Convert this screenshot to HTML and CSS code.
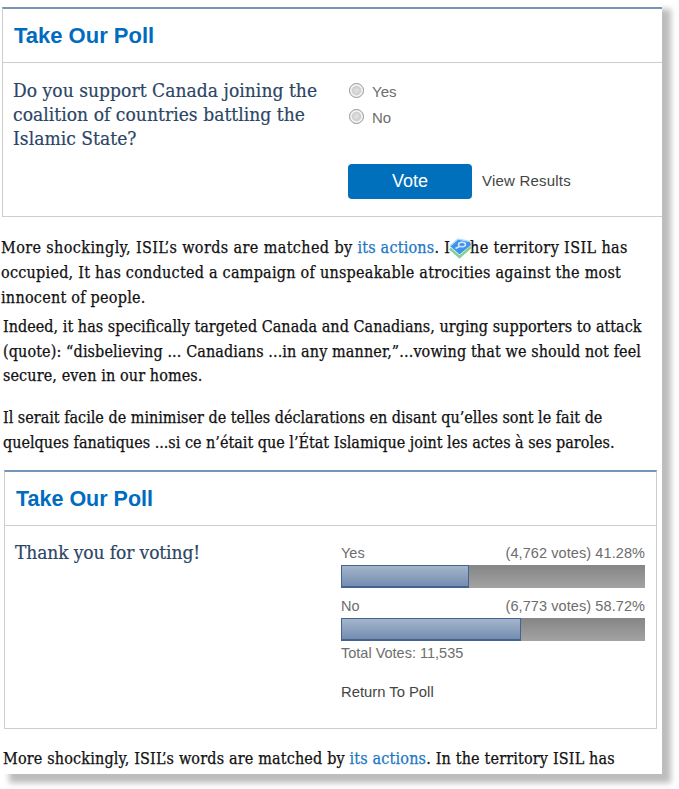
FILE: index.html
```html
<!DOCTYPE html>
<html lang="en">
<head>
    <meta charset="UTF-8">
    <meta name="viewport" content="width=device-width, initial-scale=1.0">
    <title>Take Our Poll</title>
    <link rel="stylesheet" href="styles.css">
</head>
<body>
    <div class="page">
        <!-- Open poll -->
        <section class="poll poll-open">
            <h2 class="poll-title">Take Our Poll</h2>
            <div class="poll-body">
                <p class="question">Do you support Canada joining the<br>coalition of countries battling the<br>Islamic State?</p>
                <form class="poll-form">
                    <label class="option"><input type="radio" name="answer"><span>Yes</span></label>
                    <label class="option"><input type="radio" name="answer"><span>No</span></label>
                    <div class="actions">
                        <button type="button" class="vote">Vote</button>
                        <a class="poll-link" href="#">View Results</a>
                    </div>
                </form>
            </div>
        </section>

        <p class="text text-first"><span class="lead">More shockingly, ISIL’s words are matched by <a href="#">its actions</a>. I<span class="marker">n t<svg class="marker-icon" width="24" height="24" viewBox="0 0 24 24">
            <path d="M1 11.500 L10.500 20 L22 10" fill="none" stroke="#86d192" stroke-width="2.500"/>
            <path d="M1 9 L9 2 L21 4.500 L22 8 L10.500 17.500 Z" fill="#3f93ec"/>
            <path d="M1 9 L9 2 L21 4.500" fill="none" stroke="#b5dcf8" stroke-width="1.500"/>
            <ellipse cx="13" cy="7.500" rx="3.500" ry="2.300" fill="#3f93ec" stroke="#d3ebfd" stroke-width="1.500"/>
            <path d="M10.500 9.500 L6.500 11.500" stroke="#d3ebfd" stroke-width="1.800"/>
        </svg></span>he territory ISIL has</span><br>occupied, It has conducted a campaign of unspeakable atrocities against the most<br>innocent of people.</p>
        <p class="text text-second"><span class="lead">Indeed, it has specifically targeted Canada and Canadians, urging supporters to attack</span><br>(quote): “disbelieving ... Canadians ...in any manner,”...vowing that we should not feel<br>secure, even in our homes.</p>
        <p class="text text-french" lang="fr">Il serait facile de minimiser de telles déclarations en disant qu’elles sont le fait de<br>quelques fanatiques ...si ce n’était que l’État Islamique joint les actes à ses paroles.</p>

        <!-- Poll results -->
        <section class="poll poll-results">
            <h2 class="poll-title">Take Our Poll</h2>
            <div class="poll-body">
                <p class="question">Thank you for voting!</p>
                <div class="results">
                    <div class="result">
                        <div class="result-label"><span>Yes</span><span class="votes">(4,762 votes) 41.28%</span></div>
                        <div class="bar"><div class="bar-fill" style="width: 42.1%"></div></div>
                    </div>
                    <div class="result">
                        <div class="result-label"><span>No</span><span class="votes">(6,773 votes) 58.72%</span></div>
                        <div class="bar"><div class="bar-fill" style="width: 59.2%"></div></div>
                    </div>
                    <div class="total">Total Votes: 11,535</div>
                    <a class="poll-link" href="#">Return To Poll</a>
                </div>
            </div>
        </section>

        <p class="text text-last">More shockingly, ISIL’s words are matched by <a href="#">its actions</a>. In the territory ISIL has</p>
    </div>
</body>
</html>
```
FILE: styles.css
```css
:root {
    --blue: #0070bd;
    --heading-blue: #006cbf;
    --navy: #2b4565;
    --line: #cdcdcd;
    --grey-text: #6d6d6d;
    --sans: "Liberation Sans", Arial, sans-serif;
    --serif: "DejaVu Serif Condensed", "DejaVu Serif", serif;
}

* {
    box-sizing: border-box;
}

body {
    margin: 0;
    height: 789px;
    background-color: #fff;
    font-family: var(--sans);
    overflow: hidden;
}

a {
    text-decoration: none;
}

h2, p {
    margin: 0;
}

.page {
    width: 662px;
    height: 774px;
    padding-top: 7px;
    background-color: #fff;
    box-shadow: 9px 9px 6px #bdbdbd;
}

.poll {
    border: 1px solid var(--line);
    border-top: 2px solid #7795b4;
}

.poll-open {
    height: 210px;
    margin-left: 2px;
    border-right: none;
}

.poll-results {
    height: 259px;
    margin: 15px 5px 0 4px;
}

.poll-title {
    height: 54px;
    padding-left: 11px;
    border-bottom: 1px solid var(--line);
    color: var(--heading-blue);
    font-size: 22px;
    line-height: 54px;
}

.poll-results .poll-title {
    font-size: 21.5px;
}

.poll-body {
    display: flex;
}

.question {
    width: 334px;
    padding: 15px 0 0 10px;
    color: var(--navy);
    font-family: var(--serif);
    font-size: 19px;
    line-height: 24px;
    letter-spacing: 0.06px;
    white-space: nowrap;
    -webkit-text-stroke: 0.2px var(--navy);
}

.poll-results .question {
    width: 336px;
    padding-top: 14px;
    letter-spacing: -0.1px;
}

.poll-form {
    padding: 15px 0 0 11px;
}

.option {
    display: flex;
    align-items: center;
    gap: 8px;
    height: 26px;
    padding-left: 1px;
    color: var(--grey-text);
    font-size: 15px;
}

.option input {
    appearance: none;
    width: 15px;
    height: 15px;
    margin: 0 0 1px;
    border: 1px solid #929292;
    border-radius: 50%;
    background: radial-gradient(circle, #e4e4e4 0, #cecece 4px, #f6f6f6 5.5px);
}

.actions {
    display: flex;
    align-items: center;
    gap: 10px;
    margin-top: 34px;
}

.vote {
    width: 124px;
    height: 35px;
    padding: 0;
    border: none;
    border-radius: 4px;
    background-color: var(--blue);
    color: #fff;
    font-family: var(--sans);
    font-size: 18px;
}

.poll-link {
    color: #444;
    font-size: 14.8px;
}

.actions .poll-link {
    padding-bottom: 2px;
    font-size: 15px;
    letter-spacing: 0.2px;
}

.text {
    color: #111;
    font-family: var(--serif);
    font-size: 16px;
    line-height: 25px;
    white-space: nowrap;
    -webkit-text-stroke: 0.25px;
}

.text a {
    color: #1c78c4;
}

.text-first {
    padding: 18px 0 0 1px;
    letter-spacing: 0.25px;
}

.text-first .lead {
    letter-spacing: 0.39px;
}

.text-first a {
    letter-spacing: 0.2px;
}

.text-second {
    padding: 5px 0 0 3px;
    line-height: 24.6px;
    letter-spacing: 0.11px;
}

.text-second .lead {
    letter-spacing: 0.03px;
}

.text-french {
    padding: 16px 0 0 3px;
}

.text-last {
    padding: 17px 0 0 3px;
    letter-spacing: 0.17px;
}

/* map pin sitting on top of the sentence */
.marker {
    position: relative;
    color: transparent;
    letter-spacing: 0;
}

.marker-icon {
    position: absolute;
    left: -1px;
    top: -1px;
}

.results {
    width: 304px;
    padding-top: 17px;
    color: var(--grey-text);
    font-size: 14.5px;
}

.result {
    margin-bottom: 8px;
}

.result-label {
    display: flex;
    justify-content: space-between;
    height: 22px;
    line-height: 20px;
}

.votes {
    letter-spacing: 0.08px;
}

.bar {
    height: 23px;
    background: linear-gradient(#858585, #a3a3a3);
}

.bar-fill {
    height: 23px;
    border: 1px solid #426493;
    border-bottom-width: 2px;
    background: linear-gradient(#a4b5cb, #758db0);
}

.total {
    height: 39px;
    margin-top: -4px;
}
```
